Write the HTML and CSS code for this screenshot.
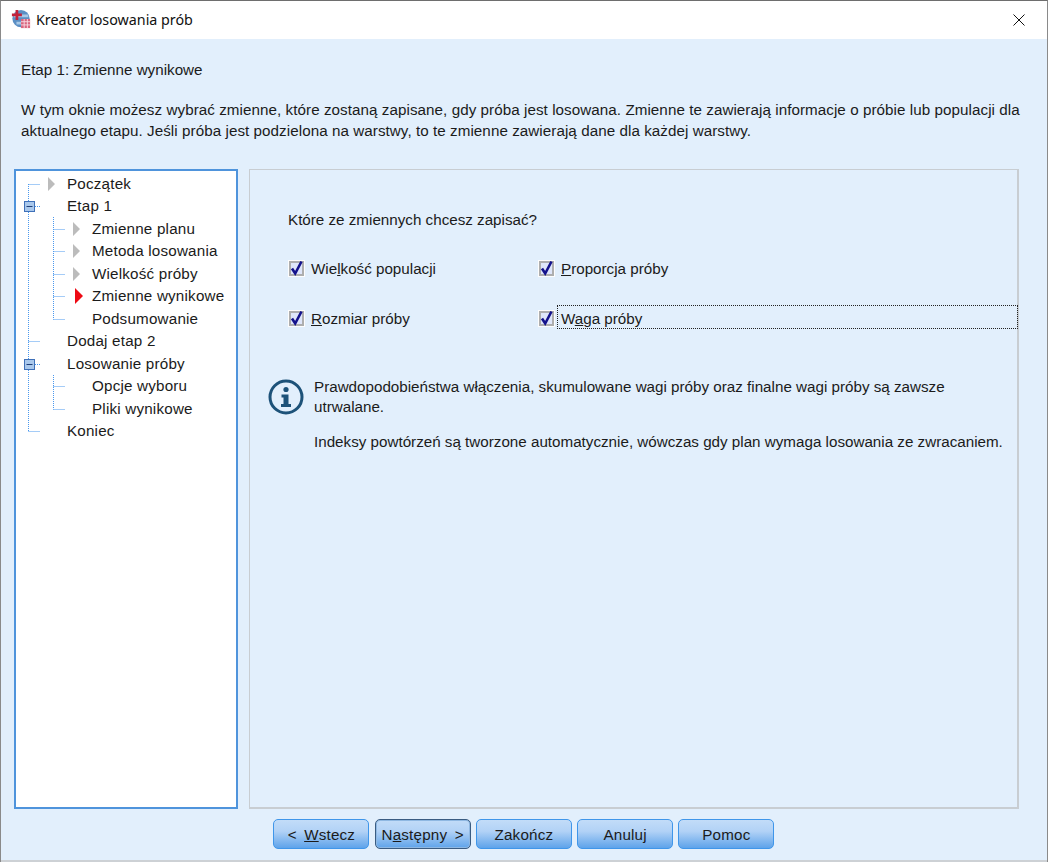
FILE: index.html
```html
<!DOCTYPE html>
<html lang="pl">
<head>
<meta charset="utf-8">
<title>Kreator losowania prób</title>
<link rel="stylesheet" href="styles.css">
</head>
<body>
<div class="window">
  <header class="titlebar">
    <svg class="app-icon" width="20" height="20" viewBox="0 0 22 22">
      <circle cx="11" cy="10.5" r="9.5" fill="#5b8fc4"/>
      <path d="M3 6h16v3H3zM6 14h8v3H6z" fill="#a9c9e6"/>
      <path d="M5 1h3v4h4v3H8v4H5V8H1V5h4z" fill="#c2213a"/>
      <rect x="11" y="11" width="10" height="10" fill="#d9667f"/>
      <path d="M11 14h10M11 17.500h10M14.500 11v10M18 11v10" stroke="#f7dbe2" stroke-width="1"/>
    </svg>
    <span class="title-text">Kreator losowania prób</span>
    <svg class="close" width="12" height="12" viewBox="0 0 12 12"><path d="M.5.500l11 11M11.500.5l-11 11" stroke="#111" stroke-width="1"/></svg>
  </header>
  <div class="content">
    <section class="intro">
      <h1 class="step">Etap 1: Zmienne wynikowe</h1>
      <p class="desc">W tym oknie możesz wybrać zmienne, które zostaną zapisane, gdy próba jest losowana. Zmienne te zawierają informacje o próbie lub populacji dla aktualnego etapu. Jeśli próba jest podzielona na warstwy, to te zmienne zawierają dane dla każdej warstwy.</p>
    </section>
    <main class="main">
      <nav class="tree">
        <svg class="tree-lines" width="80" height="300" viewBox="15 170 80 300">
          <g stroke="#4a98ee" stroke-width="1" stroke-dasharray="1 1" fill="none">
            <path d="M28.500 184v247.500M28.500 184.500h12M35 206.500h6M28.500 341.500h12M35 364.500h6M28.500 431.500h12"/>
            <path d="M53.500 217v102.500M53.500 229.500h12M53.500 251.500h12M53.500 274.500h12M53.500 296.500h12M53.500 319.500h12"/>
            <path d="M53.500 375v34.500M53.500 386.500h12M53.500 409.500h12"/>
          </g>
          <g fill="#bcbcbc">
            <path d="M48 177l7 7-7 7zM73 222l7 7-7 7zM73 244l7 7-7 7zM73 267l7 7-7 7z"/>
          </g>
          <path d="M75 288l8 8-8 8z" fill="#ee0a14"/>
          <g>
            <rect x="24.500" y="201.500" width="10" height="10" fill="#a9c8ec" stroke="#3f70b8"/>
            <path d="M26.500 206.500h6" stroke="#1f3f78"/>
            <rect x="24.500" y="359.500" width="10" height="10" fill="#a9c8ec" stroke="#3f70b8"/>
            <path d="M26.500 364.500h6" stroke="#1f3f78"/>
          </g>
        </svg>
        <ul class="tree-list">
          <li class="lvl1">Początek</li>
          <li class="lvl1">Etap 1</li>
          <li class="lvl2">Zmienne planu</li>
          <li class="lvl2">Metoda losowania</li>
          <li class="lvl2">Wielkość próby</li>
          <li class="lvl2">Zmienne wynikowe</li>
          <li class="lvl2">Podsumowanie</li>
          <li class="lvl1">Dodaj etap 2</li>
          <li class="lvl1">Losowanie próby</li>
          <li class="lvl2">Opcje wyboru</li>
          <li class="lvl2">Pliki wynikowe</li>
          <li class="lvl1">Koniec</li>
        </ul>
      </nav>
      <section class="panel">
        <p class="question">Które ze zmiennych chcesz zapisać?</p>
        <div class="checks">
          <label class="check"><svg class="box"><use href="#cb"/></svg><span>Wie<u>l</u>kość populacji</span></label>
          <label class="check"><svg class="box"><use href="#cb"/></svg><span><u>P</u>roporcja próby</span></label>
          <label class="check"><svg class="box"><use href="#cb"/></svg><span><u>R</u>ozmiar próby</span></label>
          <label class="check"><svg class="box"><use href="#cb"/></svg><span class="focused">W<u>a</u>ga próby</span></label>
        </div>
        <div class="info">
          <svg class="info-icon" width="36" height="36" viewBox="0 0 36 36">
            <circle cx="18" cy="18" r="16" fill="none" stroke="#1d5279" stroke-width="3"/>
            <circle cx="18" cy="10.500" r="2.600" fill="#1d5279"/>
            <path d="M13.500 15.500h7v9.500h2.500v3h-10v-3h2.500v-6.500h-2z" fill="#1d5279"/>
          </svg>
          <div class="info-text">
            <p>Prawdopodobieństwa włączenia, skumulowane wagi próby oraz finalne wagi próby są zawsze utrwalane.</p>
            <p>Indeksy powtórzeń są tworzone automatycznie, wówczas gdy plan wymaga losowania ze zwracaniem.</p>
          </div>
        </div>
      </section>
    </main>
    <footer class="buttons">
      <button class="btn">&lt; <u>W</u>stecz</button>
      <button class="btn default">N<u>a</u>stępny &gt;</button>
      <button class="btn">Zakończ</button>
      <button class="btn">Anuluj</button>
      <button class="btn">Pomoc</button>
    </footer>
  </div>
</div>
<svg class="defs" width="0" height="0">
  <symbol id="cb" viewBox="0 0 17 17">
    <rect x="0" y="0" width="17" height="17" fill="#fdfdfd"/>
    <rect x="1" y="1" width="15" height="15" fill="#aeaeae"/>
    <rect x="3" y="3" width="11" height="11" fill="#dfe6fa"/>
    <path d="M4 8.500l3.200 5L13.500 1.500" fill="none" stroke="#14128c" stroke-width="2.600"/>
  </symbol>
</svg>
</body>
</html>
```
FILE: styles.css
```css
* { box-sizing: border-box; }
html, body { margin: 0; padding: 0; }
body { width: 1048px; height: 862px; overflow: hidden; font-family: "Liberation Sans", Arial, sans-serif; font-size: 15.2px; color: #1b1b1b; background: #fff; }
.window { width: 1048px; height: 862px; display: flex; flex-direction: column; border: 1px solid #8a8a8a; border-top-color: #6e6e6e; border-bottom: 0; }
.titlebar { height: 38px; background: #fff; display: flex; align-items: center; padding: 0 15px 2px 10px; flex: none; }
.app-icon { flex: none; margin-right: 5px; }
.title-text { font-family: "Noto Sans", sans-serif; font-size: 14.3px; color: #111; flex: 1; }
.close { flex: none; margin: 2px 7px 0 0; }
.content { flex: 1; min-height: 0; display: flex; flex-direction: column; background: #e2effc; border-bottom: 2px solid #cdd1d5; }
.intro { padding: 23px 10px 0 20px; height: 130px; flex: none; }
.step { margin: 0; font-size: 15.2px; font-weight: normal; line-height: 16px; }
.desc { margin: 21px 0 0; line-height: 21px; letter-spacing: 0.06px; }
.main { flex: none; height: 640px; display: flex; padding: 0 28px 0 13px; gap: 11px; }
.tree { position: relative; width: 224px; flex: none; background: #fff; border: 2px solid #4f94dc; }
.tree-lines { position: absolute; left: -1px; top: -1px; }
.tree-list { list-style: none; margin: 0; padding: 1.750px 0 0; letter-spacing: 0.2px; }
.tree-list li { height: 22.500px; line-height: 22px; white-space: nowrap; }
.lvl1 { padding-left: 51px; }
.lvl2 { padding-left: 76px; }
.panel { flex: 1; border: 1px solid #c8cdd2; border-right-width: 2px; border-bottom-width: 2px; padding: 41px 0 0 38px; }
.question { margin: 0; line-height: 18px; }
.checks { display: grid; grid-template-columns: 250px 1fr; grid-auto-rows: 50px; margin-top: 14px; }
.check { display: flex; align-items: center; gap: 6px; min-width: 0; }
.box { width: 17px; height: 17px; flex: none; }
.focused { flex: 1; height: 24px; line-height: 28px; margin: 0 -1px 2px -4px; padding-left: 4px; outline: 1px dotted #222; outline-offset: -1px; }
.info { display: flex; margin-top: 26px; margin-left: -20px; align-items: flex-start; }
.info-icon { flex: none; margin: 10px 10px 0 0; }
.info-text { width: 700px; padding-top: 8px; }
.info-text p { margin: 0 0 15px; line-height: 20px; }
.buttons { flex: 1; display: flex; justify-content: flex-start; gap: 5.250px; padding: 10px 0 0 272.400px; }
.btn { width: 96px; height: 30px; padding: 0; border: 1px solid #3f96ea; border-radius: 5px; background: linear-gradient(#c2dcf8, #b2d2f6 40%, #5ea3ea); font-family: inherit; font-size: 15.2px; letter-spacing: 0.2px; word-spacing: 3px; color: #1b1b1b; }
.btn.default { border: 1px solid #3a5c82; box-shadow: inset 0 0 0 1px #8fb8e2; }
.defs { position: absolute; }
```
